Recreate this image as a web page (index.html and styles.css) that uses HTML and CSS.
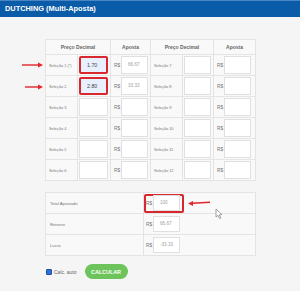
FILE: index.html
```html
<!DOCTYPE html>
<html lang="pt">
<head>
    <meta name="viewport" content="width=device-width, initial-scale=1.0">
    <title>Dutching</title>
    <link rel="stylesheet" href="styles.css">
</head>
<body>
    <div class="header">DUTCHING (Multi-Aposta)</div>

    <div class="content">
        <table class="odds">
            <colgroup>
                <col style="width:32px"><col style="width:33px"><col style="width:40px">
                <col style="width:32px"><col style="width:31px"><col style="width:42px">
            </colgroup>
            <tr>
                <th colspan="2">Preço Decimal</th><th>Aposta</th>
                <th colspan="2">Preço Decimal</th><th>Aposta</th>
            </tr>
            <tr>
                <td class="lbl">Seleção 1 (*)</td>
                <td><div class="box hot">1.70</div></td>
                <td><span class="rs">R$</span><div class="box stake">66.67</div></td>
                <td class="lbl">Seleção 7</td>
                <td><div class="box narrow"></div></td>
                <td><span class="rs">R$</span><div class="box stake"></div></td>
            </tr>
            <tr>
                <td class="lbl">Seleção 2</td>
                <td><div class="box hot">2.80</div></td>
                <td><span class="rs">R$</span><div class="box stake">33.33</div></td>
                <td class="lbl">Seleção 8</td>
                <td><div class="box narrow"></div></td>
                <td><span class="rs">R$</span><div class="box stake"></div></td>
            </tr>
            <tr>
                <td class="lbl">Seleção 3</td>
                <td><div class="box"></div></td>
                <td><span class="rs">R$</span><div class="box stake"></div></td>
                <td class="lbl">Seleção 9</td>
                <td><div class="box narrow"></div></td>
                <td><span class="rs">R$</span><div class="box stake"></div></td>
            </tr>
            <tr>
                <td class="lbl">Seleção 4</td>
                <td><div class="box"></div></td>
                <td><span class="rs">R$</span><div class="box stake"></div></td>
                <td class="lbl">Seleção 10</td>
                <td><div class="box narrow"></div></td>
                <td><span class="rs">R$</span><div class="box stake"></div></td>
            </tr>
            <tr>
                <td class="lbl">Seleção 5</td>
                <td><div class="box"></div></td>
                <td><span class="rs">R$</span><div class="box stake"></div></td>
                <td class="lbl">Seleção 11</td>
                <td><div class="box narrow"></div></td>
                <td><span class="rs">R$</span><div class="box stake"></div></td>
            </tr>
            <tr>
                <td class="lbl">Seleção 6</td>
                <td><div class="box"></div></td>
                <td><span class="rs">R$</span><div class="box stake"></div></td>
                <td class="lbl">Seleção 12</td>
                <td><div class="box narrow"></div></td>
                <td><span class="rs">R$</span><div class="box stake"></div></td>
            </tr>
        </table>

        <table class="totals">
            <colgroup><col style="width:98px"><col style="width:112px"></colgroup>
            <tr>
                <td class="lbl">Total Apostado</td>
                <td><div class="pair marked"><span class="rs">R$</span><div class="box stake">100</div></div></td>
            </tr>
            <tr>
                <td class="lbl">Retorno</td>
                <td><div class="pair"><span class="rs">R$</span><div class="box stake">66.67</div></div></td>
            </tr>
            <tr>
                <td class="lbl">Lucro</td>
                <td><div class="pair"><span class="rs">R$</span><div class="box stake">-33.33</div></div></td>
            </tr>
        </table>

        <div class="actions">
            <span class="check"></span>
            <span class="auto">Calc. auto</span>
            <button class="calc">CALCULAR</button>
        </div>
    </div>

    <!-- annotations drawn over the screenshot -->
    <svg class="marks" width="300" height="291" viewBox="0 0 300 291">
        <g stroke="#e0262b" stroke-width="1.4" fill="#e0262b">
            <line x1="22" y1="65" x2="39" y2="65"/>
            <polygon points="43,65 38,62.5 38,67.5" stroke="none"/>
            <line x1="25" y1="87" x2="39" y2="87"/>
            <polygon points="43,87 38,84.5 38,89.5" stroke="none"/>
            <line x1="210" y1="202.3" x2="192" y2="203.3"/>
            <polygon points="188,203.5 193,201 193,206" stroke="none"/>
        </g>
        <path d="M216 209 L216 217 L218 215.3 L219.6 218.6 L220.8 218 L219.3 214.8 L221.8 214.6 Z"
              fill="#fff" stroke="#666" stroke-width="0.6"/>
    </svg>
</body>
</html>
```

FILE: styles.css
```css
body {
    margin: 0;
    font-family: 'Liberation Sans', Arial, sans-serif;
    background-color: #f5f5f5;
    color: #555;
}

.header {
    height: 17px;
    line-height: 17px;
    padding-left: 5px;
    background-color: #0b5ca8;
    box-shadow: inset 0 1px 0 #4a86c4;
    color: #fff;
    font-size: 7.4px;
    font-weight: bold;
}

.content {
    width: 210px;
    margin: 22px auto 0;
}

table {
    border-collapse: collapse;
    table-layout: fixed;
    width: 210px;
    background-color: #f9f9f9;
}

th, td {
    border: 1px solid #e4e4e4;
    padding: 0;
}

th {
    height: 14px;
    font-size: 5px;
    font-weight: bold;
    color: #666;
    text-align: center;
}

.odds td {
    height: 20px;
}

td.lbl {
    padding-left: 3px;
    font-size: 3.9px;
    color: #777;
    white-space: nowrap;
}

.box {
    display: inline-block;
    vertical-align: middle;
    box-sizing: border-box;
    width: 29px;
    height: 18px;
    margin-left: 1px;
    padding-left: 6px;
    line-height: 16px;
    background-color: #fff;
    border: 1px solid #e0e0e0;
    font-size: 5px;
    color: #555;
}

.box.narrow {
    width: 27px;
}

.box.hot {
    border: 2px solid #d8282d;
    border-radius: 2px;
    background-color: #e8f0fe;
    line-height: 14px;
    font-size: 5.3px;
    color: #444;
}

.box.stake {
    width: 27px;
    margin-left: 1px;
    color: #a0a0a0;
    font-size: 4.6px;
}

.rs {
    display: inline-block;
    vertical-align: middle;
    margin-left: 3px;
    width: 6px;
    font-size: 4.8px;
    color: #777;
}

.totals {
    margin-top: 11px;
}

.totals td {
    height: 20px;
}

.totals td.lbl {
    padding-left: 4px;
    font-size: 4.2px;
}

.pair {
    display: inline-flex;
    align-items: center;
    vertical-align: middle;
    box-sizing: border-box;
    height: 19px;
    padding-right: 2px;
}

.pair .rs {
    margin-left: 2px;
}

.pair .box.stake {
    height: 16px;
    line-height: 14px;
}

.pair.marked {
    border: 2px solid #d8282d;
    border-radius: 2px;
}

.pair.marked .rs {
    margin-left: 0;
}

.actions {
    display: flex;
    align-items: center;
    margin-top: 8px;
    height: 15px;
}

.check {
    width: 4px;
    height: 4px;
    margin-left: 1px;
    background-color: #2f6fd6;
    border: 0.5px solid #1d4fa6;
    border-radius: 1px;
}

.auto {
    margin-left: 2px;
    font-size: 5px;
    color: #666;
}

.calc {
    margin-left: 8px;
    width: 43px;
    height: 15px;
    padding: 0;
    border: none;
    border-radius: 8px;
    background-color: #6cc45a;
    color: #fff;
    font-family: 'Liberation Sans', Arial, sans-serif;
    font-size: 5.4px;
    font-weight: bold;
}

.marks {
    position: absolute;
    left: 0;
    top: 0;
    pointer-events: none;
}
```
